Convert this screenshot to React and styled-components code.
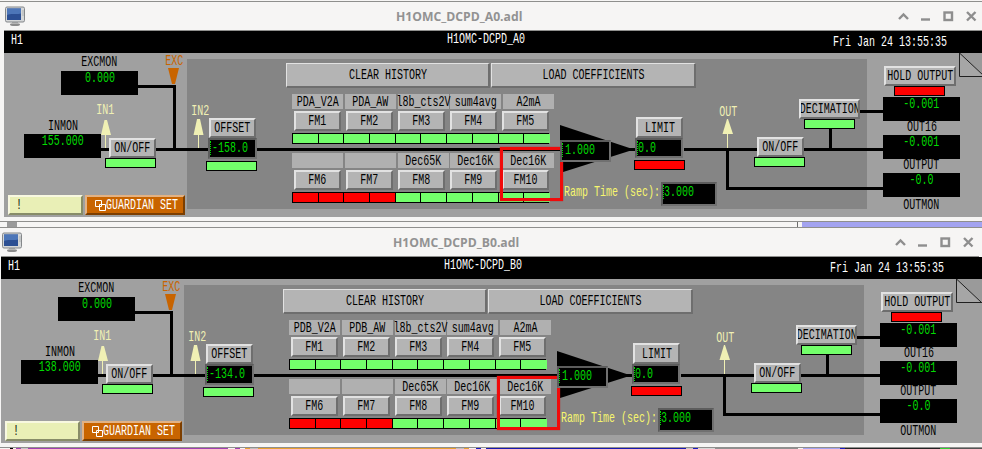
import React from "react";
import styled, { createGlobalStyle, css } from "styled-components";

const GlobalStyle = createGlobalStyle`
html, body {
  margin: 0;
  padding: 0;
  background: #f6f5f4;
  overflow: hidden;
}
`;

const Page = styled.div`
  width: 982px;
  height: 449px;
  overflow: hidden;
  padding-top: 1px;
  box-sizing: border-box;
  display: flex;
  flex-direction: column;
`;

const Window = styled.section`
  width: 990px;
  flex: none;
  border-top: 1px solid #8f8f8d;
  padding-left: ${(p) => p.$inset}px;
  box-sizing: border-box;
`;

const TitleBar = styled.header`
  width: 978px;
  height: 29px;
  display: flex;
  align-items: center;
  padding-left: 1px;
  padding-right: 5px;
  box-sizing: border-box;
  border-bottom: 1px solid #8f8f8d;
`;

const TitleText = styled.div`
  margin-left: 371px;
  color: #929292;
  font: bold 12.2px "Open Sans", "Noto Sans", sans-serif;
  white-space: nowrap;
`;

const Controls = styled.div`
  margin-left: auto;
  display: flex;
  align-items: center;
  gap: 12px;
`;

const Header = styled.div`
  height: 22px;
  background: #000;
  position: relative;
`;

const HeaderText = styled.div`
  position: absolute;
  left: ${(p) => p.$x}px;
  top: ${(p) => p.$y}px;
  color: #fff;
  display: flex;
`;

/* X-style fixed font: tall and narrow, 6px per char */
const T = styled.span`
  display: inline-block;
  font: 14.6px/12px "Liberation Mono", monospace;
  transform: scaleX(0.685);
  transform-origin: ${(p) => (p.$left ? "left" : "center")};
  white-space: pre;
  flex: none;
`;

const Canvas = styled.div`
  position: relative;
  height: 164px;
  background: #a0a0a0;
  color: #000;
`;

const Gap = styled.div`
  height: 4px;
`;

const at = css`
  position: absolute;
  left: ${(p) => p.$x}px;
  top: ${(p) => p.$y}px;
  width: ${(p) => p.$w}px;
  height: ${(p) => p.$h}px;
  box-sizing: border-box;
`;

const InnerPanel = styled.div`
  ${at}
  background: #858585;
`;

const Wires = styled.svg`
  position: absolute;
  left: 0;
  top: 0;
`;

const bevel = css`
  border: 2px solid;
  border-color: #e2e2e2 #6e6e6e #6e6e6e #e2e2e2;
  background: #b4b4b4;
  box-sizing: border-box;
  display: flex;
  align-items: center;
  justify-content: center;
  overflow: hidden;
`;

const Button = styled.div`
  ${at}
  ${bevel}
`;

const BigButton = styled.div`
  ${at}
  ${bevel}
  border-width: 1px 2px 2px 1px;
`;

const Lamp = styled.div`
  ${at}
  background: ${(p) => (p.$on ? "#73ff6b" : "#ff0000")};
  border: 1px solid #000;
`;

const Label = styled.div`
  ${at}
  display: flex;
  justify-content: center;
  align-items: center;
  color: ${(p) => p.$color || "#000"};
`;

const Monitor = styled.div`
  ${at}
  background: #000;
  color: #00dc00;
  display: flex;
  justify-content: center;
  padding-top: 1px;
`;

const EntryBox = styled.div`
  ${at}
  background: #000;
  color: #00dc00;
  border: 2px solid;
  border-color: #5c5c5c #707070 #707070 #5c5c5c;
  padding: 2px 0 0 ${(p) => p.$pad}px;
  display: flex;
`;

const Caret = styled.i`
  position: absolute;
  left: 0;
  top: 1px;
  height: 14px;
  width: 2px;
  border-left: 1px dotted #00dc00;
  box-sizing: border-box;
`;

const NoteField = styled.div`
  ${at}
  background: #e9efb6;
  border: 2px solid;
  border-color: #f8f8e0 #878c68 #878c68 #f8f8e0;
  padding-left: 6px;
  display: flex;
  align-items: center;
`;

const GuardianButton = styled.div`
  ${at}
  background: #c86400;
  color: #fff;
  border: 2px solid;
  border-color: #e2b284 #7c3e00 #7c3e00 #e2b284;
  display: flex;
  align-items: center;
  padding-left: 8px;
  svg {
    flex: none;
  }
`;

const RampText = styled.div`
  ${at}
  color: #f6f66e;
  display: flex;
  align-items: center;
`;

const Corner = styled.svg`
  position: absolute;
  left: 955px;
  top: 0;
`;

const Bank = styled.div`
  ${at}
  display: flex;
  flex-direction: column;
  gap: 9px;
`;

const BankRow = styled.div`
  display: flex;
  flex-direction: column;
  gap: 2px;
`;

const TagRow = styled.div`
  display: grid;
  grid-template-columns: repeat(5, 51px);
  column-gap: 1.75px;
`;

const Tag = styled.div`
  height: 15px;
  background: #b0b0b0;
  display: flex;
  justify-content: center;
  align-items: center;
  color: #000;
  min-width: 0;
`;

const FmRow = styled.div`
  display: grid;
  grid-template-columns: repeat(5, 46.5px);
  column-gap: 5.5px;
  padding-left: 2px;
`;

const FmButton = styled.div`
  ${bevel}
  height: 20px;
`;

const LedRow = styled.div`
  display: grid;
  grid-template-columns: repeat(10, 25.7px);
  width: 257px;
  height: 11px;
  border: 1px solid #000;
  box-sizing: border-box;
  background: #000;
`;

const Led = styled.div`
  background: ${(p) => (p.$on ? "#73ff6b" : "#ff0000")};
  border-right: 1px solid #000;
  &:last-child {
    border-right: none;
  }
`;

const RedBox = styled.div`
  ${at}
  border: 3px solid #f00a0a;
  box-shadow: 0 0 1px #c02020;
`;

const StripRow = styled.div`
  display: flex;
  height: ${(p) => p.$h}px;
  width: 982px;
  flex: none;
  overflow: hidden;
  border-top: ${(p) => (p.$line ? "1px solid #8f8f8d" : "none")};
`;

const StripPart = styled.div`
  flex: none;
  width: ${(p) => p.$w}px;
  background: ${(p) => p.$c};
  border-top: ${(p) => (p.$t ? `1px solid ${p.$t}` : "none")};
  box-sizing: border-box;
`;

function ComputerIcon() {
  return (
    <svg width="20" height="20" viewBox="0 0 20 20">
      <ellipse cx="10" cy="18.5" rx="5" ry="1.5" fill="#8b8b8b" />
      <rect x="7" y="15" width="6" height="3" fill="#b5b5b5" />
      <rect x="0.5" y="1" width="19" height="15" rx="1.5" fill="#d5d7d8" stroke="#84878a" />
      <rect x="2" y="2.5" width="14" height="11.5" fill="#2c4f93" />
      <path d="M2 2.5h14v5C11 9 7 7 2 9z" fill="#4d76b8" />
      <path d="M17.5 5h1M17.5 7h1M17.5 9h1" stroke="#8d9092" />
    </svg>
  );
}

function WindowControls() {
  const stroke = { stroke: "#8e8e8e", strokeWidth: 2.4, fill: "none" };
  return (
    <Controls>
      <svg width="11" height="9" viewBox="0 0 11 9">
        <path d="M1 7l4.5-4.5L10 7" {...stroke} />
      </svg>
      <svg width="10" height="10" viewBox="0 0 10 10">
        <path d="M0 8.5h9" {...stroke} />
      </svg>
      <svg width="11" height="11" viewBox="0 0 11 11">
        <rect x="1.5" y="1.5" width="7.5" height="7.5" {...stroke} />
      </svg>
      <svg width="11" height="11" viewBox="0 0 11 11">
        <path d="M1 1l8.5 8.5M9.5 1L1 9.5" {...stroke} />
      </svg>
    </Controls>
  );
}

function WireLayer() {
  const wires = [
    [134, 32, 38, 3],
    [169, 32, 3, 64],
    [97, 95, 460, 3],
    [680, 95, 73, 3],
    [800, 95, 79, 3],
    [722, 96, 3, 41],
    [722, 134, 157, 3],
    [825, 76, 3, 20],
    [856, 57, 23, 3],
    [610, 95, 22, 3],
  ];
  return (
    <Wires width="978" height="164" viewBox="0 0 978 164">
      {wires.map(([x, y, w, h]) => (
        <rect key={`${x}-${y}`} x={x} y={y} width={w} height={h} fill="#000" />
      ))}
      <polygon points="556,72 630,96.5 556,120" fill="#000" />
      <polygon points="164,15 175,15 171,31 168,31" fill="#c86400" />
      <polygon points="100.5,67 103,67 107,82 97,82" fill="#f0f0b4" />
      <rect x="101" y="82" width="1" height="13" fill="#f0f0b4" />
      <polygon points="193,66 196,66 199.5,82 189.5,82" fill="#f0f0b4" />
      <rect x="194" y="82" width="1" height="13" fill="#f0f0b4" />
      <polygon points="723,66 724,66 729,81 718.5,81" fill="#f0f0b4" />
      <rect x="723" y="81" width="1" height="14" fill="#f0f0b4" />
    </Wires>
  );
}

function FilterRow({ tags, names, leds }) {
  return (
    <BankRow>
      <TagRow>
        {tags.map((t, i) => (
          <Tag key={i}>
            <T>{t}</T>
          </Tag>
        ))}
      </TagRow>
      <FmRow>
        {names.map((n) => (
          <FmButton key={n}>
            <T>{n}</T>
          </FmButton>
        ))}
      </FmRow>
      <LedRow>
        {leds.map((on, i) => (
          <Led key={i} $on={on} />
        ))}
      </LedRow>
    </BankRow>
  );
}

function FilterPanel({ inset, data }) {
  return (
    <Window $inset={inset}>
      <TitleBar>
        <ComputerIcon />
        <TitleText>{data.file}</TitleText>
        <WindowControls />
      </TitleBar>
      <Header>
        <HeaderText $x={7} $y={3}>
          <T $left>H1</T>
        </HeaderText>
        <HeaderText $x={443} $y={2}>
          <T $left>{data.device}</T>
        </HeaderText>
        <HeaderText $x={829} $y={5}>
          <T $left>Fri Jan 24 13:55:35</T>
        </HeaderText>
      </Header>
      <Canvas>
        <InnerPanel $x={183} $y={6} $w={680} $h={150} />
        <WireLayer />
        <Corner width="30" height="26" viewBox="0 0 30 26">
          <polygon points="0.5,0 27,24 0.5,24" fill="#a6a6a6" />
          <polygon points="0.5,0 30,0 30,24 27,24" fill="#9a9a9a" />
          <path d="M0.5 0V23.5H30M0.5 0L25 23" stroke="#202020" fill="none" />
        </Corner>

        <Label $x={57} $y={2} $w={77} $h={14}>
          <T>EXCMON</T>
        </Label>
        <Monitor $x={57} $y={18} $w={77} $h={24}>
          <T>0.000</T>
        </Monitor>
        <Label $x={150} $y={1} $w={40} $h={14} $color="#c86400">
          <T>EXC</T>
        </Label>
        <Label $x={81} $y={50} $w={40} $h={14} $color="#f0f0b4">
          <T>IN1</T>
        </Label>
        <Label $x={20} $y={66} $w={77} $h={14}>
          <T>INMON</T>
        </Label>
        <Monitor $x={20} $y={81} $w={77} $h={24}>
          <T>{data.inmon}</T>
        </Monitor>
        <Button $x={105} $y={85} $w={47} $h={20}>
          <T>ON/OFF</T>
        </Button>
        <Lamp $x={101} $y={105} $w={51} $h={10} $on />

        <Label $x={176} $y={51} $w={40} $h={14} $color="#f0f0b4">
          <T>IN2</T>
        </Label>
        <Button $x={205} $y={65} $w={47} $h={20}>
          <T>OFFSET</T>
        </Button>
        <EntryBox $x={204} $y={85} $w={49} $h={21} $pad={2}>
          <Caret />
          <T $left>{data.offset}</T>
        </EntryBox>
        <Lamp $x={202} $y={108} $w={51} $h={10} $on />

        <NoteField $x={4} $y={142} $w={75} $h={20}>
          <T $left>!</T>
        </NoteField>
        <GuardianButton $x={81} $y={142} $w={100} $h={20}>
          <svg width="11" height="11" viewBox="0 0 11 11">
            <path d="M0.5 0.5h6v6h-6zM4.5 4.5h6v6h-6z" stroke="#fff" fill="#c86400" />
          </svg>
          <T $left>GUARDIAN SET</T>
        </GuardianButton>

        <BigButton $x={282} $y={10} $w={204} $h={25}>
          <T>CLEAR HISTORY</T>
        </BigButton>
        <BigButton $x={487} $y={10} $w={205} $h={25}>
          <T>LOAD COEFFICIENTS</T>
        </BigButton>

        <Bank $x={288} $y={41} $w={270} $h={110}>
          <FilterRow
            tags={[data.v2a, data.aw, "l8b_cts2V", "sum4avg", "A2mA"]}
            names={["FM1", "FM2", "FM3", "FM4", "FM5"]}
            leds={Array(10).fill(true)}
          />
          <FilterRow
            tags={["", "", "Dec65K", "Dec16K", "Dec16K"]}
            names={["FM6", "FM7", "FM8", "FM9", "FM10"]}
            leds={[false, false, false, false, true, true, true, true, true, true]}
          />
        </Bank>
        <RedBox $x={496} $y={data.redY} $w={63} $h={54} />

        <EntryBox $x={556} $y={87} $w={51} $h={22} $pad={3}>
          <Caret />
          <T $left>1.000</T>
        </EntryBox>
        <Button $x={632} $y={64} $w={47} $h={21}>
          <T>LIMIT</T>
        </Button>
        <EntryBox $x={631} $y={85} $w={48} $h={20} $pad={1}>
          <Caret />
          <T $left>0.0</T>
        </EntryBox>
        <Lamp $x={630} $y={107} $w={51} $h={10} />
        <RampText $x={560} $y={132} $w={97} $h={14}>
          <T $left>Ramp Time (sec):</T>
        </RampText>
        <EntryBox $x={657} $y={129} $w={56} $h={24} $pad={1}>
          <Caret />
          <T $left>3.000</T>
        </EntryBox>

        <Label $x={704} $y={52} $w={40} $h={14} $color="#f0f0b4">
          <T>OUT</T>
        </Label>
        <Button $x={753} $y={84} $w={47} $h={20}>
          <T>ON/OFF</T>
        </Button>
        <Lamp $x={750} $y={104} $w={51} $h={10} $on />
        <Button $x={795} $y={46} $w={61} $h={20}>
          <T>DECIMATION</T>
        </Button>
        <Lamp $x={800} $y={66} $w={51} $h={10} $on />

        <Button $x={880} $y={13} $w={72} $h={20}>
          <T>HOLD OUTPUT</T>
        </Button>
        <Lamp $x={890} $y={33} $w={51} $h={10} />
        <Monitor $x={879} $y={44} $w={77} $h={24}>
          <T>-0.001</T>
        </Monitor>
        <Label $x={879} $y={67} $w={77} $h={14}>
          <T>OUT16</T>
        </Label>
        <Monitor $x={879} $y={82} $w={77} $h={24}>
          <T>-0.001</T>
        </Monitor>
        <Label $x={879} $y={105} $w={77} $h={14}>
          <T>OUTPUT</T>
        </Label>
        <Monitor $x={879} $y={120} $w={77} $h={24}>
          <T>-0.0</T>
        </Monitor>
        <Label $x={879} $y={145} $w={77} $h={14}>
          <T>OUTMON</T>
        </Label>
      </Canvas>
      <Gap />
    </Window>
  );
}

const panelA = {
  file: "H1OMC_DCPD_A0.adl",
  device: "H1OMC-DCPD_A0",
  inmon: "155.000",
  offset: "-158.0",
  v2a: "PDA_V2A",
  aw: "PDA_AW",
  redY: 94,
};

const panelB = {
  file: "H1OMC_DCPD_B0.adl",
  device: "H1OMC-DCPD_B0",
  inmon: "138.000",
  offset: "-134.0",
  v2a: "PDB_V2A",
  aw: "PDB_AW",
  redY: 97,
};

// slivers of the windows stacked behind the two panels
const middleStrip = [
  [7, "#f6f5f4"],
  [10, "#9a9a9a"],
  [780, "#f6f5f4"],
  [1, "#6c6c6c"],
  [4, "#f6f5f4"],
  [180, "#a3a3f0"],
];

const bottomStrip = [
  [10, "#f6f5f4"],
  [3, "#000"],
  [3, "#f6f5f4"],
  [5, "#a040b0"],
  [7, "#c8c8c8"],
  [200, "#ead6f0", "#a040b0"],
  [7, "#f6f5f4"],
  [5, "#a040b0"],
  [5, "#f6f5f4"],
  [5, "#e8a030"],
  [8, "#c0c0c0"],
  [198, "#fbf0d8", "#e8a030"],
  [8, "#c0c0c0"],
  [5, "#e8a030"],
  [7, "#f6f5f4"],
  [5, "#1818c0"],
  [5, "#f6f5f4"],
  [200, "#f6f5f4", "#1818b0"],
  [7, "#c8c8c8"],
  [5, "#1818c0"],
  [17, "#d8d8d8"],
  [83, "#f6f5f4", "#8f8f8f"],
  [5, "#f6f5f4"],
  [37, "#a3a3f0"],
  [5, "#1818c0"],
  [95, "#222"],
  [10, "#30d030"],
  [32, "#555"],
];

function Strip({ parts, h, line }) {
  return (
    <StripRow $h={h} $line={line}>
      {parts.map(([w, c, t], i) => (
        <StripPart key={i} $w={w} $c={c} $t={t} />
      ))}
    </StripRow>
  );
}

export default function App() {
  return (
    <Page>
      <GlobalStyle />
      <FilterPanel inset={4} data={panelA} />
      <Strip parts={middleStrip} h={5} line />
      <FilterPanel inset={1} data={panelB} />
      <Strip parts={bottomStrip} h={3} line />
    </Page>
  );
}
